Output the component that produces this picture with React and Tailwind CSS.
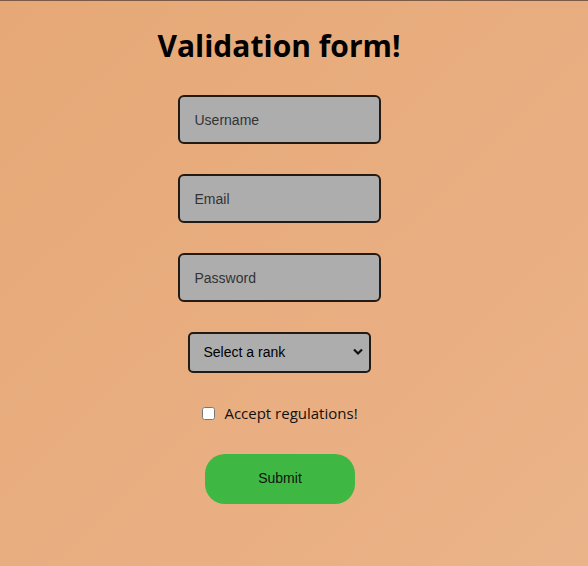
import React from "react";

const App = () => {
  const inputClass =
    "w-[203px] h-[49px] rounded-[6px] border-2 border-[#231a14] bg-[#adadad] px-[15px] text-[14px] text-[#222] placeholder:text-[#333] outline-none font-['Liberation_Sans',Arial,sans-serif]";

  return (
    <div className="min-h-[566px] w-full border-t border-[#7b5b45] bg-gradient-to-br from-[#e6a876] to-[#ebb389]">
      <form className="flex w-[558px] flex-col items-center">
        <h1 className="mt-[21px] mb-[25px] text-[30px] font-bold leading-[48px] text-black font-['Open_Sans','Noto_Sans',sans-serif]">
          Validation form!
        </h1>
        <div className="flex flex-col gap-[30px]">
          <input type="text" placeholder="Username" className={inputClass} />
          <input type="email" placeholder="Email" className={inputClass} />
          <input type="password" placeholder="Password" className={inputClass} />
        </div>
        <div className="relative mt-[30px] w-[183px]">
          <select
            defaultValue=""
            className="h-[41px] w-full appearance-none rounded-[5px] border-2 border-[#231a14] bg-[#adadad] pl-[14px] text-[14px] text-black outline-none font-['Liberation_Sans',Arial,sans-serif]"
          >
            <option value="" disabled>
              Select a rank
            </option>
            <option value="1">Rank 1</option>
            <option value="2">Rank 2</option>
          </select>
          <svg
            className="pointer-events-none absolute right-[8px] top-[16px]"
            width="10"
            height="8"
            viewBox="0 0 10 8"
          >
            <path d="M1 1.5 L5 5.5 L9 1.5" fill="none" stroke="#111" strokeWidth="2.2" />
          </svg>
        </div>
        <label className="mt-[29px] ml-[2px] flex items-center gap-[9px] text-[15px] text-[#111] font-['Open_Sans','Noto_Sans',sans-serif]">
          <input type="checkbox" className="h-[13px] w-[13px]" />
          Accept regulations!
        </label>
        <button
          type="button"
          className="mt-[29px] ml-[2px] h-[50px] w-[150px] rounded-[20px] bg-[#3eb843] text-[14px] text-[#111] font-['Liberation_Sans',Arial,sans-serif]"
        >
          Submit
        </button>
      </form>
    </div>
  );
};

export default App;
